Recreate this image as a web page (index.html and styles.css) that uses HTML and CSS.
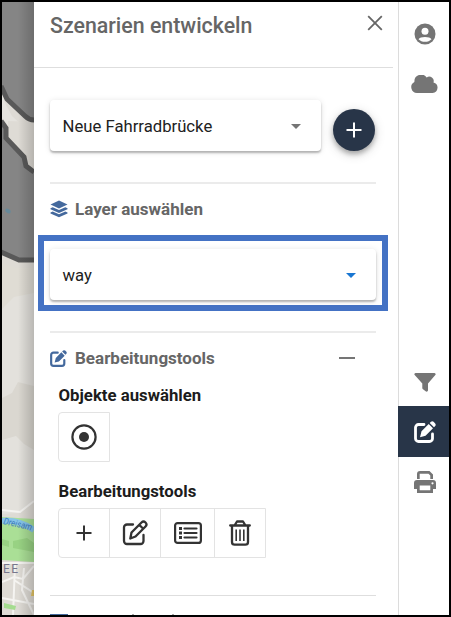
FILE: index.html
```html
<!DOCTYPE html>
<html lang="de">
<head>
<meta charset="utf-8">
<title>Szenarien entwickeln</title>
<link rel="stylesheet" href="styles.css">
</head>
<body>
<svg class="defs" width="0" height="0" aria-hidden="true">
  <symbol id="pen" viewBox="0 0 22 22"><path d="M10 3.5H4.5a3 3 0 0 0-3 3v11a3 3 0 0 0 3 3h11a3 3 0 0 0 3-3V13" fill="none" stroke="currentColor" stroke-width="2.8" stroke-linecap="round"/><path d="M14.7 3 19 7.300 11.500 14.800 6 16.300 7.500 10.200ZM15.700 2 17 .8q1.300-1 2.600 0l1.600 1.600q1 1.300 0 2.600L20 6.300Z" fill="currentColor"/></symbol>
</svg>
<div class="app">
  <div class="map">
    <svg width="32" height="613" viewBox="2 2 32 613">
      <defs><linearGradient id="shade"><stop offset=".5" stop-color="#000" stop-opacity="0"/><stop offset="1" stop-color="#000" stop-opacity=".18"/></linearGradient></defs>
      <rect x="2" y="2" width="32" height="613" fill="#dedbd5"/>
      <path d="M2 86 9 100 26 117Q29 120 34 120V0H2ZM2 120 6 128 8 142 25 160 34 171V262H20L2 252Z" fill="#858585"/>
      <path d="M2 94 6 105 12 116 24 127 34 134 34 156 9 137 7 124 2 118Z" fill="#e5e3de"/>
      <path d="M24 160 34 162V172L26 167Z" fill="#dedbd5"/>
      <path d="M8 121 34 122V165L24 154 8 138Z" fill="#dedbd5"/>
      <path d="M1 86 7 99 25 116Q29 120 34 120M1 121 6 128 6 138 24 157 26 166 34 172M1 252 19 260H34" fill="none" stroke="#595959" stroke-width="5"/>
      <ellipse cx="8" cy="211" rx="3" ry="2" fill="#66899a" transform="rotate(30 8 211)"/>
      <path d="M2 263 16 268H34V295L15 300 2 309Z" fill="#dfdcd4"/>
      <path d="M2 309 14 297 34 293V500L18 513 2 514Z" fill="#e3e1dc"/>
      <path d="M2 398 12 393 18 382 34 386V450L24 444 16 436 2 440Z" fill="#dad7d0"/>
      <path d="M2 517 18 518 34 519V562L2 560Z" fill="#aadf96"/>
      <path d="M13 541 27 538 34 543V552L13 548ZM2 539 9 541V547L2 545Z" fill="#98d283"/>
      <path d="M2 521Q18 519 34 530" stroke="#87c4e9" stroke-width="6" fill="none"/>
      <path d="M2 510 20 512 34 501M2 563 34 563M2 582 14 577 23 579 34 566M15 565 13 615M24 568 22 590 34 615M2 598 34 604M14 580 34 593" stroke="#f5f4f1" stroke-width="2" fill="none"/>
      <path d="M4 603 16 606 15 610 4 608Z" fill="#a5dc90"/>
      <path d="M32 590H34V596H31Z" fill="#e5c665"/>
      <text class="river" x="3" y="524" textLength="29" lengthAdjust="spacingAndGlyphs" transform="rotate(13 3 524)">Dreisam</text>
      <text class="place" x="3" y="573">EE</text>
      <rect x="2" y="2" width="32" height="613" fill="url(#shade)"/>
    </svg>
  </div>
  <main class="panel">
    <header class="head">
      <h1><span>Szenarien entwickeln</span></h1>
      <svg class="close" width="16" height="16" viewBox="0 0 16 16"><path d="m1.200 1.200 13.600 13.600M14.800 1.200 1.200 14.800" stroke="#666" stroke-width="1.800"/></svg>
    </header>
    <div class="scenario">
      <div class="select small"><span>Neue Fahrradbrücke</span><i class="caret"></i></div>
      <button class="add"><svg width="16" height="16" viewBox="0 0 16 16"><path d="M8 .5v15M.5 8h15" stroke="#fff" stroke-width="2"/></svg></button>
    </div>
    <section class="layers">
      <h2><svg width="18" height="18" viewBox="0 0 18 18" fill="#44699d"><path d="M9 .5 17.500 4.500 9 8.500.5 4.500ZM.5 8.200 2.700 7.200 9 10.100 15.300 7.200 17.500 8.200V9.200L9 13 .5 9.200ZM.5 12.500 2.700 11.500 9 14.300 15.300 11.500 17.500 12.500V13.500L9 17.300.5 13.500Z"/></svg><span>Layer auswählen</span></h2>
      <div class="highlight"><div class="select"><span>way</span><i class="caret blue"></i></div></div>
    </section>
    <section class="tools">
      <h2><svg class="blue-pen" width="17" height="17"><use href="#pen"/></svg><span>Bearbeitungstools</span><i class="minus"></i></h2>
      <h3 class="t1"><span>Objekte auswählen</span></h3>
      <div class="group"><div class="tool single"><svg width="28" height="28" viewBox="0 0 28 28"><circle cx="14" cy="14" r="11.600" fill="none" stroke="#333" stroke-width="2.200"/><circle cx="14" cy="14" r="5" fill="#333"/></svg></div></div>
      <h3 class="t2"><span>Bearbeitungstools</span></h3>
      <div class="group four">
        <div class="tool"><svg width="16" height="16" viewBox="0 0 16 16"><path d="M8 .5v15M.5 8h15" stroke="#333" stroke-width="2"/></svg></div>
        <div class="tool"><svg width="26" height="26" viewBox="0 0 26 26" fill="none" stroke="#333" stroke-width="2.300"><path d="M11 4.500H5a3 3 0 0 0-3 3V21a3 3 0 0 0 3 3h13.500a3 3 0 0 0 3-3v-6M8.300 18.500 9.500 12.500 19.500 2.500a2.800 2.800 0 0 1 4 4L13.500 16.500ZM17.200 4.800l4 4" stroke-linecap="round" stroke-linejoin="round"/></svg></div>
        <div class="tool"><svg width="28" height="22" viewBox="0 0 28 22" fill="none" stroke="#333" stroke-width="2.200"><rect x="1.100" y="1.100" width="25.800" height="19.800" rx="2.500"/><path d="M10.500 6.500H22.500M10.500 11H22.500M10.500 15.500H22.500" stroke-linecap="round"/><path d="M5 6.500H8M5 11H8M5 15.500H8" stroke-width="2.800"/></svg></div>
        <div class="tool"><svg width="22" height="26" viewBox="0 0 22 26" fill="none" stroke="#333" stroke-width="2.300"><path d="M1.200 5.500H20.800M5.500 5.500 8 1.500H14L16.500 5.500M3 5.500V22a2.700 2.700 0 0 0 2.700 2.700H16.300A2.700 2.700 0 0 0 19 22V5.500" stroke-linejoin="round" stroke-linecap="round"/><path d="M7.200 9.500V21M11 9.500V21M14.800 9.500V21" stroke-width="1.600"/></svg></div>
      </div>
    </section>
    <footer class="next"><i class="next-icon"></i><i class="tick one"></i><i class="tick two"></i></footer>
  </main>
  <nav class="rail">
    <a><svg width="22" height="22" viewBox="0 0 22 22"><circle cx="11" cy="11" r="10.500" fill="#757575"/><circle cx="11" cy="8.200" r="3.500" fill="#fff"/><path d="M4.500 16.300C6 13.200 16 13.200 17.500 16.300C14.500 19.700 7.500 19.700 4.500 16.300Z" fill="#fff"/></svg></a>
    <a><svg width="27" height="18" viewBox="0 0 27 18"><path d="M6 18A5.900 5.900 0 0 1 3.400 6.900 6.800 6.800 0 0 1 15.700 2.500 4.400 4.400 0 0 1 22.500 7.400 5.400 5.400 0 0 1 21.600 18Z" fill="#757575"/></svg></a>
    <a class="filter"><svg width="22" height="19" viewBox="0 0 22 19"><path d="M1.500 0H20.500Q22.300.7 21.300 2L14 10.500V17.500Q13.600 19 12 18.500L9 16.300Q8.300 15.700 8.300 15V10.500L.7 2Q-.3.700 1.500 0Z" fill="#757575"/></svg></a>
    <a class="active"><svg width="22" height="22"><use href="#pen"/></svg></a>
    <a><svg width="22" height="22" viewBox="0 0 22 22" fill="#757575"><path d="M3 8V3a3 3 0 0 1 3-3H15.500L19 3.500V8H16.300V4.500L14.500 2.700H5.700V8ZM3 9H19a3 3 0 0 1 3 3V18H19V22H3V18H0V12a3 3 0 0 1 3-3ZM5.700 14.500V19.300H16.300V14.500Z"/><circle cx="18.500" cy="12.300" r="1.100" fill="#fff"/></svg></a>
  </nav>
</div>
</body>
</html>
```
FILE: styles.css
```css
* { box-sizing: border-box; }
body { margin: 0; font-family: Roboto, "Liberation Sans", sans-serif; color: #212121; }
h1, h2, h3 { margin: 0; font-weight: 500; }
svg { display: block; flex: none; }
.defs { position: absolute; }
.app { width: 451px; height: 617px; border: 2px solid #000; display: flex; overflow: hidden; background: #fff; }
.map { width: 32px; flex: none; overflow: hidden; }
.river { font: italic 9.500px Roboto, sans-serif; fill: #3f7dbb; }
.place { font: 12px Roboto, sans-serif; letter-spacing: 1.500px; fill: #77778c; }
.panel { width: 364px; flex: none; padding-left: 16px; overflow: hidden; }
.head { height: 66px; margin-left: -16px; margin-right: 5px; padding: 11px 10px 0 16px; display: flex; justify-content: space-between; align-items: flex-start; border-bottom: 1px solid #dedede; }
h1 { font-size: 21.350px; line-height: 26px; color: #666; white-space: nowrap; }
.close { margin-top: 2px; }
.scenario { display: flex; gap: 12px; padding-top: 32px; height: 114px; }
.select { width: 326px; height: 51px; padding: 2px 20px 0 12.500px; border-radius: 4px; background: #fff; box-shadow: 0 2px 2px rgba(0,0,0,.25), 0 1px 6px rgba(0,0,0,.12); display: flex; align-items: center; justify-content: space-between; font-size: 16.700px; }
.small { width: 271px; }
.caret { border: 5.500px solid transparent; border-top-color: #757575; border-bottom: 0; }
.caret.blue { border-top-color: #1976d2; }
.add { margin-top: 9px; width: 42px; height: 42px; padding: 0; border: 0; border-radius: 50%; background: #283548; display: grid; place-items: center; box-shadow: 0 3px 5px rgba(0,0,0,.28), 0 3px 12px rgba(0,0,0,.16); }
.layers { width: 326px; height: 149px; border-top: 2px solid #ebebeb; padding-top: 14px; }
h2 { display: flex; align-items: center; gap: 7px; height: 22px; font-size: 17px; font-weight: 700; color: #666; white-space: nowrap; }
.highlight { width: 350px; height: 76px; margin: 15px 0 0 -12px; padding: 8px 6px; border: 6px solid #4472c4; }
.tools { width: 326px; height: 264px; border-top: 2px solid #ebebeb; padding-top: 14px; }
.blue-pen { color: #44699d; margin-right: 1px; }
.minus { width: 16px; height: 2px; background: #757575; margin: 0 21px 1px auto; }
h3 { margin-left: 8.500px; font-size: 16.750px; font-weight: 700; line-height: 22px; white-space: nowrap; color: #1c1c1c; }
.t1 { margin-top: 15px; }
.t2 { margin-top: 18px; }
.group { display: flex; width: 52px; height: 50px; margin: 6px 0 0 8px; border: 1px solid #e3e3e3; border-radius: 4px 0 0 4px; }
.four { display: grid; grid-template-columns: 51px 51px 54px 50px; width: 208px; }
.tool { flex: 1; display: grid; place-items: center; border-right: 1px solid #e3e3e3; }
.tool:last-child { border-right: 0; }
.next { width: 326px; height: 20px; border-top: 1px solid #dedede; display: flex; align-items: flex-start; padding-top: 18px; }
.next-icon { width: 18px; height: 1px; background: #44699d; }
.tick { width: 2px; height: 1px; background: #aaa; margin-left: 64px; }
.two { margin-left: 38px; }
.rail { width: 51px; flex: none; border-left: 1px solid #dcdcdc; padding-top: 7px; }
.rail a { height: 50px; margin-right: -2px; padding-right: 1px; display: grid; place-items: center; }
.rail .filter { margin-top: 249px; height: 48px; }
.rail .active { margin-left: -1px; height: 51px; background: #283548; color: #fff; padding-right: 0; }
```
